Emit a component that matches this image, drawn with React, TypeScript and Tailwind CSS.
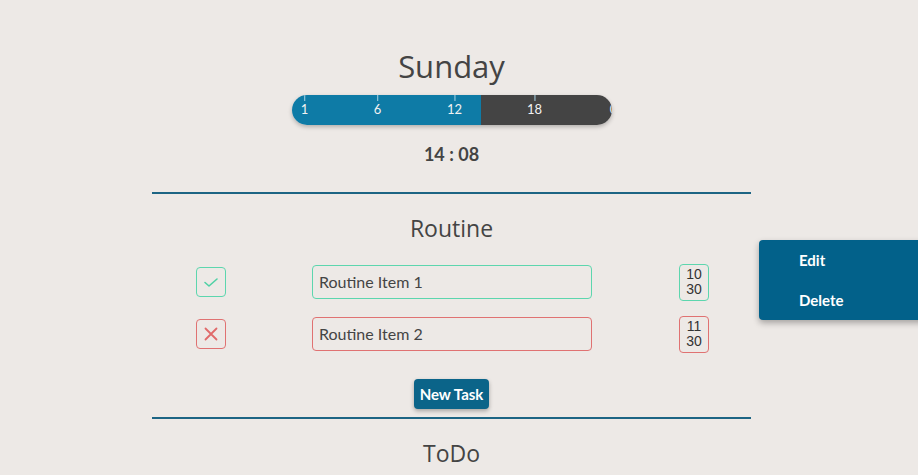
import React from "react";

const HEAD = "font-['Open_Sans','Noto_Sans',sans-serif]";
const BODY = "font-['Lato','Noto_Sans',sans-serif]";

const TICKS = [
    { label: "1", x: 13 },
    { label: "6", x: 86 },
    { label: "12", x: 163 },
    { label: "18", x: 243 },
    { label: "0", x: 322 },
];

interface RoutineItem {
    name: string;
    done: boolean;
    hour: string;
    minute: string;
}

const ITEMS: RoutineItem[] = [
    { name: "Routine Item 1", done: true, hour: "10", minute: "30" },
    { name: "Routine Item 2", done: false, hour: "11", minute: "30" },
];

function DayBar() {
    return (
        <div className="relative w-[320px] h-[30px] rounded-full overflow-hidden flex shadow-[0_2px_4px_rgba(0,0,0,0.25)]">
            <div className="w-[189px] bg-[#0e7ba6]" />
            <div className="flex-1 bg-[#444444]" />
            {TICKS.map((t) => (
                <div
                    key={t.label}
                    className="absolute top-0 flex flex-col items-center -translate-x-1/2"
                    style={{ left: t.x }}
                >
                    <div className="w-px h-[6px] bg-[#a9d3e4]" />
                    <span className={`${BODY} text-[13px] leading-[16px] text-[#f2f2f2]`}>{t.label}</span>
                </div>
            ))}
        </div>
    );
}

function Row({ item }: { item: RoutineItem }) {
    const border = item.done ? "border-[#5dd6ae]" : "border-[#e07272]";
    return (
        <div className="flex items-center h-[34px]">
            <div className="w-[44px]" />
            <div className={`w-[30px] h-[30px] rounded-[4px] border ${border} flex items-center justify-center`}>
                {item.done ? (
                    <svg width="18" height="18" viewBox="0 0 18 18" fill="none" stroke="#4fd1a5" strokeWidth="1.6" strokeLinecap="round" strokeLinejoin="round">
                        <path d="M3 9.5l4 3.5 8-7" />
                    </svg>
                ) : (
                    <svg width="18" height="18" viewBox="0 0 18 18" fill="none" stroke="#e06a6a" strokeWidth="1.8" strokeLinecap="round">
                        <path d="M3.5 3.5l11 11M14.5 3.5l-11 11" />
                    </svg>
                )}
            </div>
            <div className="w-[86px]" />
            <div className={`w-[280px] h-[34px] rounded-[4px] border ${border} flex items-center px-[6px] ${BODY} text-[16px] text-[#444]`}>
                {item.name}
            </div>
            <div className="w-[87px]" />
            <div className={`w-[30px] h-[37px] rounded-[4px] border ${border} flex flex-col items-center justify-center font-['Liberation_Sans',Arial,sans-serif] text-[14px] leading-[15px] text-[#333]`}>
                <span>{item.hour}</span>
                <span>{item.minute}</span>
            </div>
        </div>
    );
}

export default function App() {
    return (
        <div className="w-[918px] h-[475px] bg-[#ede9e6] overflow-hidden relative">
            <div className="w-[903px] flex flex-col items-center">
                <div className="w-[599px] flex flex-col items-center">
                    <h1 className={`${HEAD} text-[31px] leading-[40px] text-[#444] mt-[46px]`}>Sunday</h1>
                    <div className="mt-[9px]">
                        <DayBar />
                    </div>
                    <p className={`${BODY} font-bold text-[18px] text-[#444] mt-[17px] leading-[24px]`}>14 : 08</p>
                    <div className="w-full h-[2px] bg-[#1d6584] mt-[26px]" />
                    <h2 className={`${HEAD} text-[23px] leading-[32px] text-[#444] mt-[18px]`}>Routine</h2>
                    <div className="w-full flex flex-col gap-[18px] mt-[21px]">
                        {ITEMS.map((item) => (
                            <Row key={item.name} item={item} />
                        ))}
                    </div>
                    <button className={`${BODY} font-bold text-[15px] text-white bg-[#0b6489] rounded-[4px] h-[30px] px-[6px] mt-[28px] shadow-[0_2px_4px_rgba(0,0,0,0.3)]`}>
                        New Task
                    </button>
                    <div className="w-full h-[2px] bg-[#1d6584] mt-[8px]" />
                    <h2 className={`${HEAD} text-[23px] leading-[32px] text-[#444] mt-[18px]`}>ToDo</h2>
                </div>
            </div>
            <div className={`absolute left-[759px] top-[240px] w-[170px] h-[80px] bg-[#02618a] rounded-[4px] shadow-[0_3px_6px_rgba(0,0,0,0.3)] flex flex-col justify-center gap-[18px] pl-[40px] ${BODY} font-bold text-[15px] leading-[22px] text-white`}>
                <span>Edit</span>
                <span>Delete</span>
            </div>
        </div>
    );
}
